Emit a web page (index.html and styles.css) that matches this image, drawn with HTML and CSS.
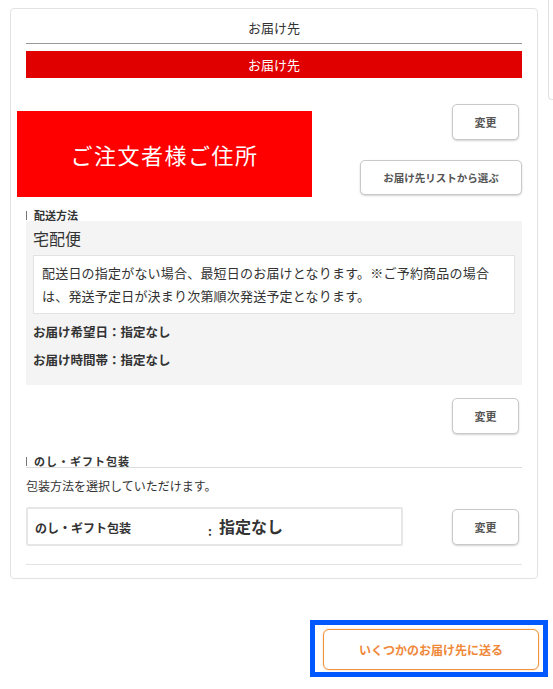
FILE: index.html
```html
<!DOCTYPE html>
<html lang="ja">
<head>
<meta charset="utf-8">
<link rel="stylesheet" href="styles.css">
</head>
<body>
<div class="layout">
  <div class="card">
    <div class="card-title">お届け先</div>
    <div class="red-bar">お届け先</div>

    <div class="address-row">
      <div class="address-banner">ご注文者様ご住所</div>
      <div class="address-actions">
        <button class="btn btn-change btn-offset">変更</button>
        <button class="btn btn-list">お届け先リストから選ぶ</button>
      </div>
    </div>

    <div class="sec-label">配送方法</div>
    <div class="ship-box">
      <div class="ship-name">宅配便</div>
      <div class="notice">配送日の指定がない場合、最短日のお届けとなります。※ご予約商品の場合は、発送予定日が決まり次第順次発送予定となります。</div>
      <div class="ship-line">お届け希望日：指定なし</div>
      <div class="ship-line">お届け時間帯：指定なし</div>
    </div>
    <div class="action-right">
      <button class="btn btn-change btn-offset">変更</button>
    </div>

    <div class="sec-label sec-label-line">のし・ギフト包装</div>
    <p class="gift-desc">包装方法を選択していただけます。</p>
    <div class="gift-row">
      <div class="gift-box">
        <span class="gift-name">のし・ギフト包装</span>
        <span class="gift-colon">:</span>
        <span class="gift-value">指定なし</span>
      </div>
      <button class="btn btn-change btn-offset">変更</button>
    </div>
    <div class="card-end"></div>
  </div>
  <div class="side-panel"></div>
</div>

<div class="footer">
  <div class="focus-ring">
    <button class="btn-multi">いくつかのお届け先に送る</button>
  </div>
</div>
</body>
</html>
```

FILE: styles.css
```css
html, body {
  margin: 0;
  padding: 0;
  background: #fff;
}
body {
  font-family: "Noto Sans CJK JP", "Noto Sans", sans-serif;
  color: #333;
  width: 553px;
  overflow: hidden;
}
.layout {
  display: flex;
  align-items: flex-start;
}
.card {
  box-sizing: border-box;
  width: 528px;
  margin: 8px 0 0 10px;
  border: 1px solid #e2e2e2;
  border-radius: 4px;
  padding: 0 15px 13px 15px;
}
.side-panel {
  width: 5px;
  height: 100px;
  margin-left: 10px;
  box-sizing: border-box;
  border-left: 1px solid #e2e2e2;
  border-bottom: 1px solid #e2e2e2;
  border-bottom-left-radius: 4px;
}
.card-title {
  text-align: center;
  font-size: 13px;
  line-height: 20px;
  padding: 9px 0 5px;
  border-bottom: 1px solid #999;
  color: #333;
}
.red-bar {
  margin-top: 7px;
  height: 27px;
  line-height: 27px;
  background: #e00000;
  color: #fff;
  text-align: center;
  font-size: 13px;
}
.address-row {
  display: flex;
  justify-content: space-between;
  align-items: flex-start;
}
.address-banner {
  margin: 33px 0 0 -9px;
  width: 295px;
  height: 86px;
  background: #ff0000;
  color: #fff;
  font-size: 22px;
  display: flex;
  align-items: center;
  justify-content: center;
  letter-spacing: 1.5px;
}
.address-actions {
  display: flex;
  flex-direction: column;
  align-items: flex-end;
  gap: 20px;
  padding-top: 26px;
}
.btn {
  font-family: "Noto Sans CJK JP", "Noto Sans", sans-serif;
  background: #fff;
  border: 1px solid #c9c9c9;
  border-radius: 5px;
  box-shadow: 0 1px 2px rgba(0, 0, 0, 0.18);
  color: #555;
  font-weight: bold;
  font-size: 11px;
  padding: 0;
  cursor: pointer;
}
.btn-change {
  width: 67px;
  height: 36px;
}
.btn-offset {
  margin-right: 3px;
}
.btn-list {
  width: 162px;
  height: 35px;
  font-size: 10.5px;
}
.sec-label {
  display: flex;
  align-items: flex-end;
  font-size: 11px;
  font-weight: bold;
  line-height: 12px;
  margin-top: 12px;
  color: #333;
}
.sec-label::before {
  content: "";
  width: 1px;
  height: 9px;
  background: #777;
  margin-right: 7px;
  margin-bottom: 1px;
}
.sec-label-line {
  margin-top: 21px;
  border-bottom: 1px solid #ddd;
  letter-spacing: 1px;
}
.ship-box {
  background: #f4f4f4;
  padding: 7px 7px 11px;
}
.ship-name {
  font-size: 16px;
  line-height: 20px;
}
.notice {
  margin-top: 7px;
  background: #fff;
  border: 1px solid #e2e2e2;
  padding: 5px 8px 6px;
  font-size: 13px;
  line-height: 23px;
  letter-spacing: 0.2px;
}
.ship-line {
  font-size: 12.5px;
  font-weight: bold;
  line-height: 28px;
}
.ship-box .notice + .ship-line {
  margin-top: 4px;
}
.action-right {
  display: flex;
  justify-content: flex-end;
  margin-top: 13px;
}
.gift-desc {
  margin: 8px 0 0;
  font-size: 12px;
  line-height: 20px;
}
.gift-row {
  display: flex;
  justify-content: space-between;
  align-items: center;
  margin-top: 11px;
}
.gift-box {
  box-sizing: border-box;
  width: 377px;
  height: 39px;
  border: 2px solid #e6e6e6;
  border-radius: 2px;
  display: flex;
  align-items: baseline;
  padding: 5px 7px 0;
}
.gift-name {
  width: 173px;
  font-size: 12px;
  font-weight: bold;
}
.gift-colon {
  font-size: 12px;
  font-weight: bold;
  width: 11px;
  position: relative;
  top: 3px;
}
.gift-value {
  font-size: 16px;
  font-weight: bold;
}
.card-end {
  margin-top: 18px;
  border-top: 1px solid #e2e2e2;
}
.footer {
  display: flex;
  justify-content: flex-end;
  padding: 41px 5px 0 0;
}
.focus-ring {
  border: 5px solid #0058ff;
  padding: 4px 4px 2px 8px;
}
.btn-multi {
  display: block;
  width: 216px;
  height: 41px;
  background: #fff;
  border: 1px solid #f2923c;
  border-radius: 6px;
  box-shadow: 0 0 2px rgba(242, 146, 60, 0.45);
  color: #f0883a;
  font-family: "Noto Sans CJK JP", "Noto Sans", sans-serif;
  font-weight: bold;
  font-size: 12px;
  padding: 0;
  cursor: pointer;
}
```
